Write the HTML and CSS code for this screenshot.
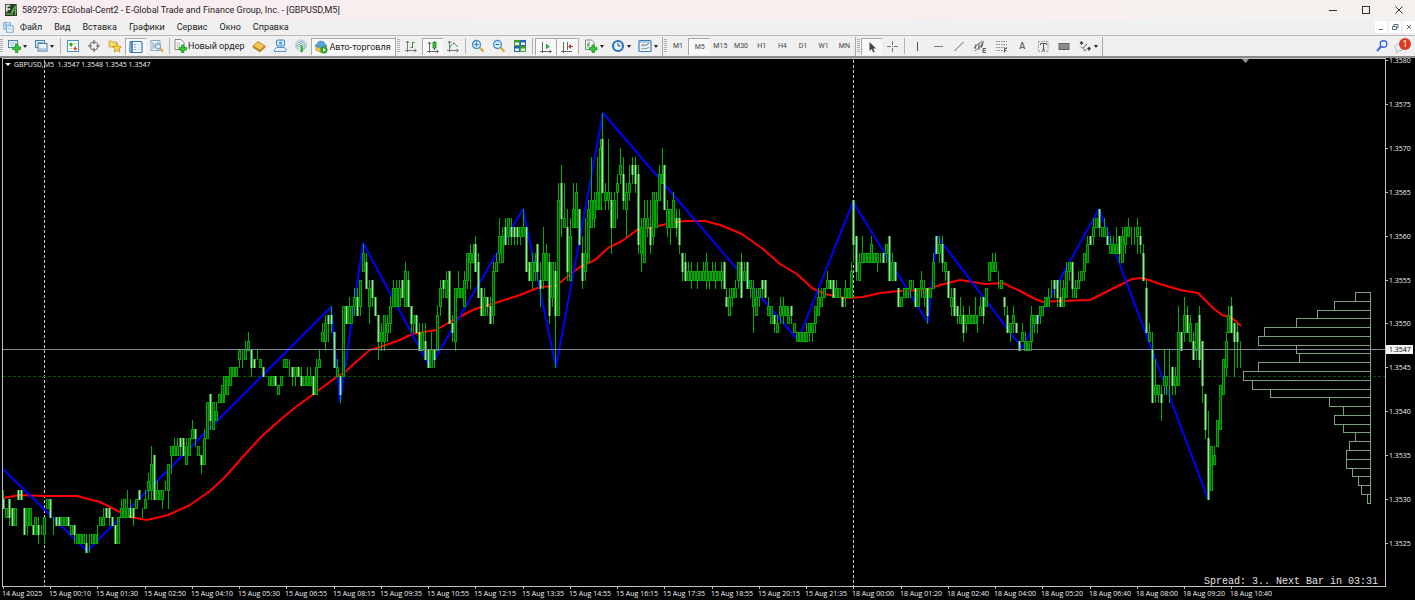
FILE: index.html
```html
<!DOCTYPE html>
<html lang="ru">
<head>
<meta charset="utf-8">
<title>5892973: EGlobal-Cent2 - [GBPUSD,M5]</title>
<link rel="stylesheet" href="styles.css">
</head>
<body>
<svg class="sprite" aria-hidden="true">
  <symbol id="i-new" viewBox="0 0 14 14"><rect x="1.5" y="1.5" width="9" height="7" fill="#eaf4fc" stroke="#4a7fae"/><path d="M3 4h6M3 6h4" stroke="#8db4d4" stroke-width=".8"/><path d="M8.500 5h2.500v3h3v2.500h-3v3h-2.500v-3h-3v-2.500h3z" fill="#35c435" stroke="#178a17" stroke-width=".7"/></symbol>
  <symbol id="i-prof" viewBox="0 0 14 14"><rect x="1.500" y="1.500" width="9" height="7" fill="#dbeaf7" stroke="#4a7fae"/><rect x="4" y="4.500" width="9" height="7.500" fill="#e9f3fb" stroke="#4a7fae"/><path d="M5 10h7M3.500 3.500h5" stroke="#7da7cb"/></symbol>
  <symbol id="i-watch" viewBox="0 0 14 14"><rect x="1.500" y="1.500" width="11" height="11" fill="#fff" stroke="#4b92c8"/><path d="M2.500 6l2.500-3L7.500 6H6v1.500H4V6z" fill="#2eae2e"/><path d="M7 9h1.500V7.500H10V9h1.500L9.200 12z" fill="#e04a2a"/><path d="M7.500 4.500h4M3 9.500h3" stroke="#b7d3a8"/></symbol>
  <symbol id="i-target" viewBox="0 0 14 14"><circle cx="7" cy="7" r="4" fill="none" stroke="#777" stroke-width="1.200"/><path d="M7 1v4M7 9v4M1 7h4M9 7h4" stroke="#666" stroke-width="1.200"/></symbol>
  <symbol id="i-star" viewBox="0 0 14 14"><path d="M1 2h3l1 1h4v5H1z" fill="#f7d86a" stroke="#bd9630" stroke-width=".7"/><path d="M9 4.500l1.400 2.800 3 .4-2.200 2.100.6 3.200L9 11.500 6.200 13l.6-3.200-2.200-2.100 3-.4z" fill="#fbd23f" stroke="#b98b1c" stroke-width=".7"/></symbol>
  <symbol id="i-nav" viewBox="0 0 14 14"><rect x="1" y="1.500" width="12" height="11" rx="1" fill="#f5faff" stroke="#3578b5" stroke-width="1.200"/><path d="M3 2v10" stroke="#4f8cc4" stroke-width="2"/><path d="M5.500 4.500h1M5.500 7h1M5.500 9.500h1" stroke="#445"/><path d="M7.500 4.500h4M7.500 7h4M7.500 9.500h4" stroke="#d3deea"/></symbol>
  <symbol id="i-test" viewBox="0 0 14 14"><rect x="1" y="1.500" width="9" height="10" fill="#edf3f8" stroke="#7b98b3" stroke-width=".8"/><path d="M3 3v7M5 4v5M8 2.500V7" stroke="#8ba3b8"/><circle cx="8" cy="7.500" r="2.700" fill="#d5ebfa" stroke="#6f96b7"/><path d="M10 9.500l3 3" stroke="#d6a438" stroke-width="1.800"/></symbol>
  <symbol id="i-order" viewBox="0 0 14 14"><path d="M2 .500h6l3 3v7H2z" fill="#fff" stroke="#777" stroke-width=".9"/><path d="M3.500 4h4M3.500 6h4M3.500 8h3" stroke="#999" stroke-width=".8"/><path d="M8.500 6H11v2.500h2.500V11H11v2.500H8.500V11H6V8.500h2.500z" fill="#3c3" stroke="#168a16" stroke-width=".7"/></symbol>
  <symbol id="i-book" viewBox="0 0 14 14"><path d="M1 7l5-4.500 7 4.500-5 4.500z" fill="#f3c64a" stroke="#a97a16" stroke-width=".8"/><path d="M1 7v1.500L8 13l5-4.500V7l-5 4.500z" fill="#d09a28" stroke="#9a6e14" stroke-width=".6"/></symbol>
  <symbol id="i-pc" viewBox="0 0 14 14"><rect x="3.500" y="1" width="8" height="6" rx="1" fill="#cfe7fb" stroke="#3f86c6"/><path d="M1.500 12.500v-2l2-2h8l1.500 2v2z" fill="#e6f1fb" stroke="#4d8cc4" stroke-width=".9"/><circle cx="7.500" cy="4" r="1.500" fill="#4e97d8"/></symbol>
  <symbol id="i-signal" viewBox="0 0 14 14"><circle cx="7" cy="6.500" r="5.700" fill="#dfeaee" stroke="#b6c8cf" stroke-width=".8"/><path d="M4.500 10a4.200 4.200 0 1 1 5 0M5.700 8a2 2 0 1 1 2.600 0" fill="none" stroke="#7fa9b5"/><path d="M7 6q3.500 2.500 1 7H7z" fill="#3cae4a" stroke="#3cae4a"/></symbol>
  <symbol id="i-auto" viewBox="0 0 14 14"><path d="M2 6L7 9l5.500-3v3L7 12.500 2 10z" fill="#f3c64a" stroke="#b58b22" stroke-width=".7"/><path d="M.800 5.500C2 5 3.200 4 3.700 2.500c1.500-1.800 5-1.800 6.500 0 .3 1.500 1.300 2.500 2.800 3L7 8z" fill="#52a7dd" stroke="#2f7bb2" stroke-width=".7"/><circle cx="10" cy="10" r="3.300" fill="#32b432" stroke="#167c16" stroke-width=".5"/><path d="M9 8.300L12 10l-3 1.700z" fill="#fff"/></symbol>
  <symbol id="i-bars" viewBox="0 0 14 14"><path d="M3.500 2v11M1 11.500h11M2 4l1.500-2L5 4M10.500 10l2 1.500-2 1.500" stroke="#777" fill="none"/><path d="M8.500 3v6M6.500 8.500h2M8.500 3.500h2" stroke="#2c9e2c"/></symbol>
  <symbol id="i-candle" viewBox="0 0 14 14"><path d="M3.500 2v11M1 11.500h11M2 4l1.500-2L5 4M10.500 10l2 1.500-2 1.500" stroke="#666" fill="none"/><path d="M8.500 1v9" stroke="#167c16"/><rect x="7" y="2.500" width="3" height="5.500" fill="#3ccc3c" stroke="#167c16" stroke-width=".8"/></symbol>
  <symbol id="i-line" viewBox="0 0 14 14"><path d="M3.500 2v11M1 11.500h11M2 4l1.500-2L5 4M10.500 10l2 1.500-2 1.500" stroke="#777" fill="none"/><path d="M4 8.500Q7.500 2 9 5l3 3" stroke="#3a9e3a" fill="none"/></symbol>
  <symbol id="i-zin" viewBox="0 0 14 14"><path d="M8.500 8.500l4 4" stroke="#d9a93a" stroke-width="2.200"/><circle cx="5.500" cy="5.500" r="4" fill="#dff0fc" stroke="#3f8fd0" stroke-width="1.300"/><path d="M3.500 5.500h4M5.500 3.500v4" stroke="#2878bb" stroke-width="1.200"/></symbol>
  <symbol id="i-zout" viewBox="0 0 14 14"><path d="M8.500 8.500l4 4" stroke="#d9a93a" stroke-width="2.200"/><circle cx="5.500" cy="5.500" r="4" fill="#dff0fc" stroke="#3f8fd0" stroke-width="1.300"/><path d="M3.500 5.500h4" stroke="#2878bb" stroke-width="1.200"/></symbol>
  <symbol id="i-tile" viewBox="0 0 14 14"><path d="M1 1h6v6H1zM7 7h6v6H7z" fill="#3e9f2d"/><path d="M7 1h6v6H7zM1 7h6v6H1z" fill="#2a62b8"/><path d="M2 3.500h4V6H2zM8 3.500h4V6H8zM2 9.500h4V12H2zM8 9.500h4V12H8z" fill="#e9f4ee"/></symbol>
  <symbol id="i-scroll" viewBox="0 0 14 14"><path d="M3.500 2v11M1 11.500h11M10.500 10l2 1.500-2 1.500" stroke="#666" fill="none"/><path d="M7 3.500l4 3-4 3z" fill="#31b531"/></symbol>
  <symbol id="i-shift" viewBox="0 0 14 14"><path d="M3.500 2v11M1 11.500h11M7.500 2v8" stroke="#666"/><path d="M8 6.500l3-2.500v2h2v1h-2v2z" fill="#b0483c"/></symbol>
  <symbol id="i-ind" viewBox="0 0 14 14"><path d="M1.500 1h6l2.500 2.500v7H1.500z" fill="#f4f8f4" stroke="#6f806f" stroke-width=".9"/><path d="M4 8.500V4.500q0-1.500 2-1M3 6h3" fill="none" stroke="#4c864c" stroke-width=".9"/><path d="M8 6h2.500v2.500H13V11h-2.500v2.500H8V11H5.500V8.500H8z" fill="#3c3" stroke="#168a16" stroke-width=".7"/></symbol>
  <symbol id="i-clock" viewBox="0 0 14 14"><circle cx="7" cy="7" r="5" fill="#eef7ff" stroke="#2875c4" stroke-width="2.200"/><path d="M7 4v3h2.500" stroke="#345" fill="none"/></symbol>
  <symbol id="i-tmpl" viewBox="0 0 14 14"><rect x="1" y="1.500" width="12" height="11" rx="1" fill="#eef6fc" stroke="#3f7fb5" stroke-width="1.200"/><path d="M1 3h12" stroke="#6ba2d0"/><path d="M3 7l2-1.500 2 1 4-2" stroke="#5b5f66" fill="none" stroke-width=".9"/><path d="M3 10.500l2-1.500 2 1 4-1.500" stroke="#6b8c74" fill="none" stroke-width=".9"/></symbol>
  <symbol id="i-cursor" viewBox="0 0 14 14"><path d="M4.500 2v9l2.200-2 1.500 3.500 1.500-.7L8.200 8.500H11z" fill="#444"/></symbol>
  <symbol id="i-cross" viewBox="0 0 14 14"><path d="M7.500 2v4M7.500 9v4M2 7.500h4M9 7.500h4M7 7.500h1" stroke="#777"/></symbol>
  <symbol id="i-v" viewBox="0 0 14 14"><path d="M7.500 3v9" stroke="#555"/></symbol>
  <symbol id="i-h" viewBox="0 0 14 14"><path d="M3 7.500h9" stroke="#777"/></symbol>
  <symbol id="i-trend" viewBox="0 0 14 14"><path d="M2.500 12l9-9" stroke="#666"/></symbol>
  <symbol id="i-equi" viewBox="0 0 14 14"><path d="M1 9l7-6M2 12l8-7M3 5l-1 5M6 4v7M9 1.500V8M10.500 2.500L8 9" stroke="#555" stroke-width=".9"/><path d="M13 9.500h-3v4h3M10 11.500h2.500" fill="none" stroke="#444" stroke-width=".9"/></symbol>
  <symbol id="i-fibo" viewBox="0 0 14 14"><path d="M2 2.500h11M2 5.500h11M2 8.500h11M2 11.500h7" stroke="#888" stroke-dasharray="1.500 1"/><path d="M10.500 13.500v-4H13M10.500 11.500h2" fill="none" stroke="#444" stroke-width=".9"/></symbol>
  <symbol id="i-label" viewBox="0 0 14 14"><rect x="2.500" y="2.500" width="9.500" height="10" fill="none" stroke="#888" stroke-width=".9" stroke-dasharray="1.500 1"/><path d="M4.500 4.500h6M7.500 4.500V11M6 11h3M4.500 4.500v1.500M10.500 4.500v1.500" stroke="#555"/></symbol>
  <symbol id="i-rect" viewBox="0 0 14 14"><rect x="2" y="4.500" width="10" height="6" fill="#8c8c8c" stroke="#666"/></symbol>
  <symbol id="i-arrows" viewBox="0 0 14 14"><path d="M3.500 2l2 2-2 2-2-2zM11 7.500l2 2-2 2.500-2-2.500z" fill="#444"/><path d="M3 7.500l2 2 4-4.500M5.500 11h3" fill="none" stroke="#555"/></symbol>
  <symbol id="i-grid" viewBox="0 0 14 14"><rect x="1" y="1" width="8.500" height="8" fill="#e7f2fb" stroke="#5d9acb"/><rect x="4.500" y="5" width="8.500" height="8" fill="#eef6fc" stroke="#5d9acb"/><path d="M1 3.500h8M3.500 1v8M6 9.500l2-2 2 2.500 2-2" fill="none" stroke="#79aed8" stroke-width=".9"/></symbol>
  <symbol id="i-app" viewBox="0 0 14 14"><rect width="14" height="14" fill="#2a3a2e"/><path d="M1 1h5v1.800H3v2.200h3V7H3v2H1z" fill="#d6e6d2"/><path d="M8 13l1-6 4-5-1 11M7 9.500l6-2.500" fill="none" stroke="#62b552" stroke-width="1.500"/><path d="M1 11.500h6" stroke="#5e8f58" stroke-width="2"/></symbol>
  <symbol id="i-search" viewBox="0 0 14 14"><circle cx="8.500" cy="5" r="3.300" fill="#eef4ff" stroke="#4168cf" stroke-width="1.400"/><path d="M6 7.500L2 12" stroke="#4168cf" stroke-width="2"/></symbol>
  <symbol id="i-chat" viewBox="0 0 14 14"><path d="M1 8q0-3 5-3t5 3-5 3.500H5L2.500 14 3 11Q1 10 1 8z" fill="#eef1f6" stroke="#a7afbd" stroke-width=".9"/></symbol>
</svg>

<header class="titlebar">
  <svg class="app-icon"><use href="#i-app"/></svg>
  <h1 class="title">5892973: EGlobal-Cent2 - E-Global Trade and Finance Group, Inc. - [GBPUSD,M5]</h1>
  <div class="win-buttons">
    <button class="win" aria-label="Свернуть"><svg viewBox="0 0 10 10"><path d="M1 5.500h8"/></svg></button>
    <button class="win" aria-label="Развернуть"><svg viewBox="0 0 10 10"><rect x="1.500" y="1.500" width="7" height="7"/></svg></button>
    <button class="win" aria-label="Закрыть"><svg viewBox="0 0 10 10"><path d="M1.500 1.500l7 7M8.500 1.500l-7 7"/></svg></button>
  </div>
</header>

<nav class="menubar">
  <svg class="menu-icon"><use href="#i-grid"/></svg>
  <button class="menu">Файл</button>
  <button class="menu">Вид</button>
  <button class="menu">Вставка</button>
  <button class="menu">Графики</button>
  <button class="menu">Сервис</button>
  <button class="menu">Окно</button>
  <button class="menu">Справка</button>
  <div class="doc-buttons">
    <button class="doc" aria-label="Свернуть окно"><svg viewBox="0 0 8 8"><path d="M2 6.500h4"/></svg></button>
    <button class="doc" aria-label="Восстановить окно"><svg viewBox="0 0 8 8"><path d="M3 3V1.500h4v3H5.500M1.500 3.500h4v3h-4z"/></svg></button>
    <button class="doc" aria-label="Закрыть окно"><svg viewBox="0 0 8 8"><path d="M2 2l4 4M6 2L2 6"/></svg></button>
  </div>
</nav>

<div class="toolbar" role="toolbar">
  <span class="grip"></span>
  <button class="tool drop" aria-label="Новый график"><svg><use href="#i-new"/></svg></button>
  <button class="tool drop" aria-label="Профили"><svg><use href="#i-prof"/></svg></button>
  <span class="sep"></span>
  <button class="tool" aria-label="Обзор рынка"><svg><use href="#i-watch"/></svg></button>
  <button class="tool" aria-label="Окно данных"><svg><use href="#i-target"/></svg></button>
  <button class="tool" aria-label="Навигатор"><svg><use href="#i-star"/></svg></button>
  <button class="tool on" aria-label="Терминал"><svg><use href="#i-nav"/></svg></button>
  <button class="tool" aria-label="Тестер стратегий"><svg><use href="#i-test"/></svg></button>
  <span class="sep"></span>
  <button class="tool wide"><svg><use href="#i-order"/></svg>Новый ордер</button>
  <button class="tool" aria-label="MetaEditor"><svg><use href="#i-book"/></svg></button>
  <button class="tool" aria-label="Хостинг"><svg><use href="#i-pc"/></svg></button>
  <button class="tool" aria-label="Сигналы"><svg><use href="#i-signal"/></svg></button>
  <button class="tool wide on"><svg><use href="#i-auto"/></svg>Авто-торговля</button>
  <span class="edge"></span><span class="grip"></span>
  <button class="tool" aria-label="Бары"><svg><use href="#i-bars"/></svg></button>
  <button class="tool on" aria-label="Японские свечи"><svg><use href="#i-candle"/></svg></button>
  <button class="tool" aria-label="Линия"><svg><use href="#i-line"/></svg></button>
  <span class="sep"></span>
  <button class="tool" aria-label="Увеличить"><svg><use href="#i-zin"/></svg></button>
  <button class="tool" aria-label="Уменьшить"><svg><use href="#i-zout"/></svg></button>
  <button class="tool" aria-label="Окна мозаикой"><svg><use href="#i-tile"/></svg></button>
  <span class="sep"></span>
  <button class="tool on" aria-label="Автопрокрутка"><svg><use href="#i-scroll"/></svg></button>
  <button class="tool on" aria-label="Сдвиг графика"><svg><use href="#i-shift"/></svg></button>
  <span class="sep"></span>
  <button class="tool drop" aria-label="Индикаторы"><svg><use href="#i-ind"/></svg></button>
  <button class="tool drop" aria-label="Периоды"><svg><use href="#i-clock"/></svg></button>
  <button class="tool drop" aria-label="Шаблоны"><svg><use href="#i-tmpl"/></svg></button>
  <span class="edge"></span><span class="grip"></span>
  <div class="frames">
    <button class="tool">M1</button><button class="tool on">M5</button><button class="tool">M15</button><button class="tool">M30</button><button class="tool">H1</button><button class="tool">H4</button><button class="tool">D1</button><button class="tool">W1</button><button class="tool">MN</button>
  </div>
  <span class="edge"></span><span class="grip"></span>
  <button class="tool on" aria-label="Курсор"><svg><use href="#i-cursor"/></svg></button>
  <button class="tool" aria-label="Перекрестие"><svg><use href="#i-cross"/></svg></button>
  <span class="sep"></span>
  <button class="tool" aria-label="Вертикальная линия"><svg><use href="#i-v"/></svg></button>
  <button class="tool" aria-label="Горизонтальная линия"><svg><use href="#i-h"/></svg></button>
  <button class="tool" aria-label="Трендовая линия"><svg><use href="#i-trend"/></svg></button>
  <button class="tool" aria-label="Канал"><svg><use href="#i-equi"/></svg></button>
  <button class="tool" aria-label="Фибоначчи"><svg><use href="#i-fibo"/></svg></button>
  <button class="tool letter">A</button>
  <button class="tool" aria-label="Метка"><svg><use href="#i-label"/></svg></button>
  <button class="tool" aria-label="Прямоугольник"><svg><use href="#i-rect"/></svg></button>
  <button class="tool drop" aria-label="Стрелки"><svg><use href="#i-arrows"/></svg></button>
  <span class="edge"></span>
  <div class="right-tools">
    <button class="tool" aria-label="Поиск"><svg><use href="#i-search"/></svg></button>
    <button class="tool notify" aria-label="Уведомления"><svg><use href="#i-chat"/></svg><span class="badge">1</span></button>
  </div>
</div>

<main class="chart">
  <svg id="plot" viewBox="0 56 1415 544" role="img" aria-label="GBPUSD M5"></svg>
</main>
<script src="chart.js"></script>
</body>
</html>
```
FILE: styles.css
```css
* { box-sizing: border-box; }
body {
  margin: 0;
  background: #000;
  font-family: Roboto, "Noto Sans", sans-serif;
  font-size: 9px;
  color: #222;
}
button {
  margin: 0;
  padding: 0;
  border: 0;
  background: none;
  font: inherit;
  color: inherit;
}
.sprite { display: none; }

.titlebar {
  display: flex;
  align-items: center;
  height: 19px;
  padding-left: 5px;
  background: linear-gradient(90deg, #f8eef1, #f9efec 60%, #f5f2ee);
}
.app-icon { width: 12px; height: 12px; }
.title { margin: 0 0 0 5px; font-size: 9px; font-weight: 400; white-space: nowrap; }
.win-buttons { display: flex; margin-left: auto; }
.win { display: flex; align-items: center; justify-content: center; width: 33px; height: 18px; }
.win svg { width: 10px; height: 10px; fill: none; stroke: #333; }

.menubar {
  display: flex;
  align-items: center;
  height: 16px;
  padding-left: 3px;
  background: #f0f0f0;
}
.menu-icon { width: 11px; height: 11px; margin-right: 6px; }
.menu { margin-right: 12px; }
.doc-buttons { display: flex; gap: 2px; margin-left: auto; }
.doc { width: 12px; height: 12px; background: #fff; }
.doc svg { display: block; width: 8px; height: 8px; margin: auto; fill: none; stroke: #5b6b82; }

.toolbar {
  display: flex;
  align-items: center;
  height: 21px;
  background: #f0f0f0;
  border-top: 1px solid #b8b8b8;
}
.grip {
  width: 3px;
  height: 14px;
  margin-right: 1px;
  background: repeating-linear-gradient(#b0b0b0 0 1px, #f0f0f0 1px 2px);
}
.sep, .edge { flex: none; width: 4px; height: 16px; }
.sep { background: linear-gradient(#b4b4b4, #b4b4b4) center / 1px 100% no-repeat; }
.edge { width: 2px; height: 19px; border-left: 1px solid #a8a8a8; }
.tool {
  flex: none;
  display: flex;
  align-items: center;
  justify-content: center;
  width: 21px;
  height: 17px;
}
.tool svg { flex: none; width: 14px; height: 14px; }
.tool.on { background: #f8f8f8; border-top: 1px solid #a9a9a9; border-left: 1px solid #a9a9a9; }
.drop { justify-content: flex-start; gap: 1px; width: 27px; padding-left: 3px; }
.drop::after {
  content: "";
  border: 2px solid transparent;
  border-top: 3px solid #222;
  border-bottom: 0;
  margin-left: 1px;
}
.wide { width: auto; gap: 1px; padding: 0 4px 0 2px; white-space: nowrap; }
.frames { display: flex; width: 187px; font-size: 7px; color: #444; }
.frames .tool { flex: 1; }
.letter { font-weight: 600; color: #666; }
.right-tools { display: flex; gap: 2px; margin-left: auto; }
.notify { position: relative; justify-content: flex-start; }
.badge {
  position: absolute;
  top: 0;
  right: 4px;
  width: 12px;
  height: 12px;
  border-radius: 50%;
  background: #dd3a24;
  color: #fff;
  line-height: 12px;
  text-align: center;
}

.chart { background: #000; }
.chart svg { display: block; width: 100%; }
.frame { fill: none; stroke: #c0c0c0; }
.top-edge { stroke: #8a8a8a; stroke-width: 2; }
.ink { fill: #f0f0f0; font-family: "Open Sans", "Noto Sans", sans-serif; font-size: 7px; }
.spread { fill: #e0e0e0; font-family: "Liberation Mono", monospace; font-size: 10px; }
.day { stroke: #ccc; stroke-dasharray: 3 2; }
.ask { stroke: #7d8b99; }
.level { stroke: #0b4f0b; stroke-dasharray: 3 2; }
.zigzag { fill: none; stroke: #0000ff; stroke-width: 2; stroke-linejoin: bevel; }
.average { fill: none; stroke: #ff0000; stroke-width: 2; stroke-linejoin: round; }
.profile { fill: none; stroke: #7fa07f; }
.wick { stroke: #00b000; }
.up { fill: #005000; stroke: #00a800; stroke-width: 1; }
.down { fill: #7dfa7d; }
.price-box { fill: #f4f4f4; }
.price-now { fill: #000; }
.shift { fill: #8796a3; }
```
FILE: chart.js
```js
// Each bar: high, body top, body bottom, low (pips above 1.3500), "d" for a falling bar.
const BARS = `
31302929d 29292828 30302827d 29292727d 29292727 31313030d 31313030d 29292626d 29292726 29292727
27272626d 28282626 28272625d 27262626 28282625 30302929 30302828d 28272726 28282727d 28282727d
28282727 28282727 28282727d 27272626 27272625d 26262525 26262525 26262525 26252424d 26252524
26262525 26262525 27262625 28282727 29282727 29292828d 29292827d 28282727d 27272525d 28282525
30292828 30302828 31292828 30292828d 29292827d 30302929 31313030d 29292928 31302929 33323130
36343130 35353030d 32313030 31313030 31313029 32313131 34343129 36363533 37363535 37363535
37373635d 37373535d 37363434 37373535 39383737 38383736d 36363535 35353433d 38373434 41413737
42423938d 41413838 41403939 42424141 43434141 44444241 44444242 45454343 45454444 45454444
47474645 47464645 48474646 49484747 47474544d 46464545d 47464646 46464545 45454444d 44444444
44444343 44444343 44444343d 43434242 44444343 46464545 46464545 46454544 45454443d 45454443
45454444d 45444343d 44444343 45444343 45444343 44444242d 46454242 47464545 50494848 51504847
51515048d 52515049d 49494545d 46454444 44444241d 52524444 52525050d 53525050 52525050 54535251
54535151d 55555251 59585656 58575454d 55545250 55555352d 53535151d 51514846d 50494847 51514847
51504948 53525049 55545252 55545252 55545252 55555353d 57565252 56555252d 52525049d 51515049
51514949d 50494747d 50494747 50484646d 47474545d 49474545 47474645d 52514747 55545251 55555453d
56555353 56565050d 51504948d 54544847 56545353 54545353 56555252 58585554 59585754 59585757
60595656d 58575353d 54545151d 54535151 53535251d 53525050d 57565150 58575656 62605857 61605757
62615959d 62626059 62616059d 61616059d 61616059d 61616059 63616060 61615656d 57575555d 58575554
58575655 59595655d 57555452d 61585554 59585555 58575150d 57575352 57565145d 66645151 68666260d
66626161 63615655d 62605555 66636161 66656161 63635959d 60585554d 62585655 64635757 69646161
65646261 69656363 71706363 74716565d 66656463 71656463 65646158d 65646161 67666562 70686766
69676463d 66656360 68666564 69686766d 69686665d 68675958d 62615856 64625757 64626160 64615958d
65656059 65646161 68676464 70676666 68686363d 64636160 63636159 65646161 63626160d 63625958d
58585655d 58575555d 57565555 57565554 56565555 57565554 56565555 57565555 58575554 56565554
57565555 57565554 56565555 57565554 57575454d 54535252d 54535151 54545352 55545353 57575554
58575353d 57565555 57575454d 55555453 55545249 54535151 54545352 55555453d 55555353d 53525151
52525050 51515049d 51504949 53525150 53525150 52525151 52515050 52525150d 50504949 49494848
49494848 49494848 50494848 50504948 50504948 52525049 54535151 54535252 54545353 56555454
55555454d 55555353d 55545353 54545353 53535252d 55545352 54545353 57565353 64645957d 60605655d
58575555 60585757 58585757 58585757 60595757 58585757 58585756 58575757 58585757d 59595857
60605555d 58575555 57575555d 54545252d 53535252 54545353 54545353 55555453 55545454 54545252d
54545252 56555453 55545352 54545150d 54545353 58575454 60605858d 60595857 60595756d 57575655
56565353d 54535251 54545151d 52525150d 53515050 52514948d 51515049 52515050 51515050 53515050
51505049 53525151 53535150d 54545252 57575555 58575656 58575656 56555554 55555454 53535251d
52514949d 50504948 52515049 50504949d 48484747d 50494848 49484747 48484747 52514847 51515049
51515049d 52525150 52525151 53535252 54535252 55545453 55555453d 55555352d 55535252d 55545252
57565353 57575655 57575453d 55545353 56555454 56565555 58585655 60595757 60605959d 62616059
62626161 63636160d 61616060 62616060 61605959d 60595858 60595858 61595858 60605857d 61605757
61615958 62616060 61606059 61606059 62616058 61605958d 59585555d 55544949d 50494848 49474141d
46434241 43434241 43424139d 47444342 44444342 47434341 45454342d 45444342 52494343 49494747d
53514948 52514949d 51504848 49484646d 50504746 52514645d 48484341d 42423837d 40373030d 36363131
36353434 39393636 43433838 46464242 49484544 52514949 53524949d 50504844d 50494845d 48474745`.trim().split(/\s+/);

const ZIGZAG = "3,469 87,551 331,307 340,403 363,243 430,367 523,209 556,367 603,113 798,340 853,202 928,323 937,236 1022,348 1099,209 1208,499";
const AVERAGE = "3,498 20,495 45,496 77,496 100,502 120,512 130,517 147,520 168,515 190,505 210,491 225,477 240,460 262,436 280,420 297,406 315,393 335,378 345,372 357,361 370,350 380,347 400,340 412,334 430,331 436,330 450,322 475,309 495,303 520,295 540,287 556,286 568,276 580,267 595,260 608,248 622,241 637,230 655,227 670,223 685,221 705,221 720,225 742,234 763,249 780,264 797,274 812,288 825,294 845,298 863,297 880,293 900,291 925,290 940,285 960,280 985,284 1003,283 1020,291 1035,299 1043,302 1060,301 1090,300 1110,290 1132,279 1143,278 1160,284 1180,290 1198,293 1213,308 1222,315 1232,318 1241,326";
const PROFILE = [1355, 1334, 1317, 1296, 1264, 1258, 1296, 1299, 1258, 1243, 1252, 1270, 1329, 1343, 1334, 1343, 1355, 1349, 1346, 1346, 1352, 1358, 1361, 1367];
const TIMES = ["14 Aug 2025", "15 Aug 00:10", "15 Aug 01:30", "15 Aug 02:50", "15 Aug 04:10", "15 Aug 05:30", "15 Aug 06:55", "15 Aug 08:15", "15 Aug 09:35", "15 Aug 10:55", "15 Aug 12:15", "15 Aug 13:35", "15 Aug 14:55", "15 Aug 16:15", "15 Aug 17:35", "15 Aug 18:55", "15 Aug 20:15", "15 Aug 21:35", "18 Aug 00:00", "18 Aug 01:20", "18 Aug 02:40", "18 Aug 04:00", "18 Aug 05:20", "18 Aug 06:40", "18 Aug 08:00", "18 Aug 09:20", "18 Aug 10:40"];

const STEP = 2.953;
const PIP = 8.78;
const barX = i => Math.round(3 + i * STEP);
const priceY = p => Math.round(60 + (80 - p) * PIP);
const out = [];
const line = (cls, x1, y1, x2, y2) => out.push(`<line class="${cls}" x1="${x1}" y1="${y1}" x2="${x2}" y2="${y2}"/>`);
const text = (cls, x, y, s) => out.push(`<text class="${cls}" x="${x}" y="${y}">${s}</text>`);

line("top-edge", 0, 57, 1415, 57);
line("day", 44.5, 60, 44.5, 586);
line("day", 853.5, 60, 853.5, 586);
line("level", 3, 376.5, 1385, 376.5);
out.push(`<polyline class="average" points="${AVERAGE}"/>`);
out.push(`<polyline class="zigzag" points="${ZIGZAG}"/>`);

BARS.forEach((bar, i) => {
  const [high, top, bottom, low] = bar.match(/\d\d/g).map(Number).map(priceY);
  const x = barX(i);
  line("wick", x + 0.5, high, x + 0.5, low + 1);
  if (bar.endsWith("d")) {
    out.push(`<rect class="down" x="${x - 0.5}" y="${top}" width="2" height="${bottom - top + 1}"/>`);
  } else {
    out.push(`<rect class="up" x="${x - 0.5}" y="${top + 0.5}" width="2" height="${bottom - top}"/>`);
  }
});

line("ask", 3, 349.5, 1385, 349.5);
PROFILE.forEach((x, i) => {
  const y = Math.round(292 + i * PIP);
  const next = Math.round(292 + (i + 1) * PIP);
  out.push(`<rect class="profile" x="${x + 0.5}" y="${y + 0.5}" width="${1370 - x}" height="${next - y}"/>`);
});

out.push('<rect class="frame" x="2.5" y="58.5" width="1383" height="528"/>');
out.push('<path class="shift" d="M1242 59h7l-3.500 4z"/>');
out.push('<path class="ink" d="M5 63h6l-3 3z"/>');
text("ink", 14, 67, "GBPUSD,M5&#160; 1.3547 1.3548 1.3545 1.3547");
for (let p = 80; p >= 25; p -= 5) {
  line("frame", 1385, priceY(p) + 0.5, 1388, priceY(p) + 0.5);
  text("ink", 1389, priceY(p) + 3, "1.35" + p);
}
out.push('<rect class="price-box" x="1386" y="345" width="27" height="9"/>');
text("ink price-now", 1389, 352, "1.3547");
TIMES.forEach((t, i) => {
  const x = Math.round(3 + i * 16 * STEP);
  line("frame", x + 0.5, 586, x + 0.5, 589);
  text("ink", x - 1, 596, t);
});
text("spread", 1204, 584, "Spread: 3.. Next Bar in 03:31");

document.getElementById("plot").innerHTML = out.join("");
```
